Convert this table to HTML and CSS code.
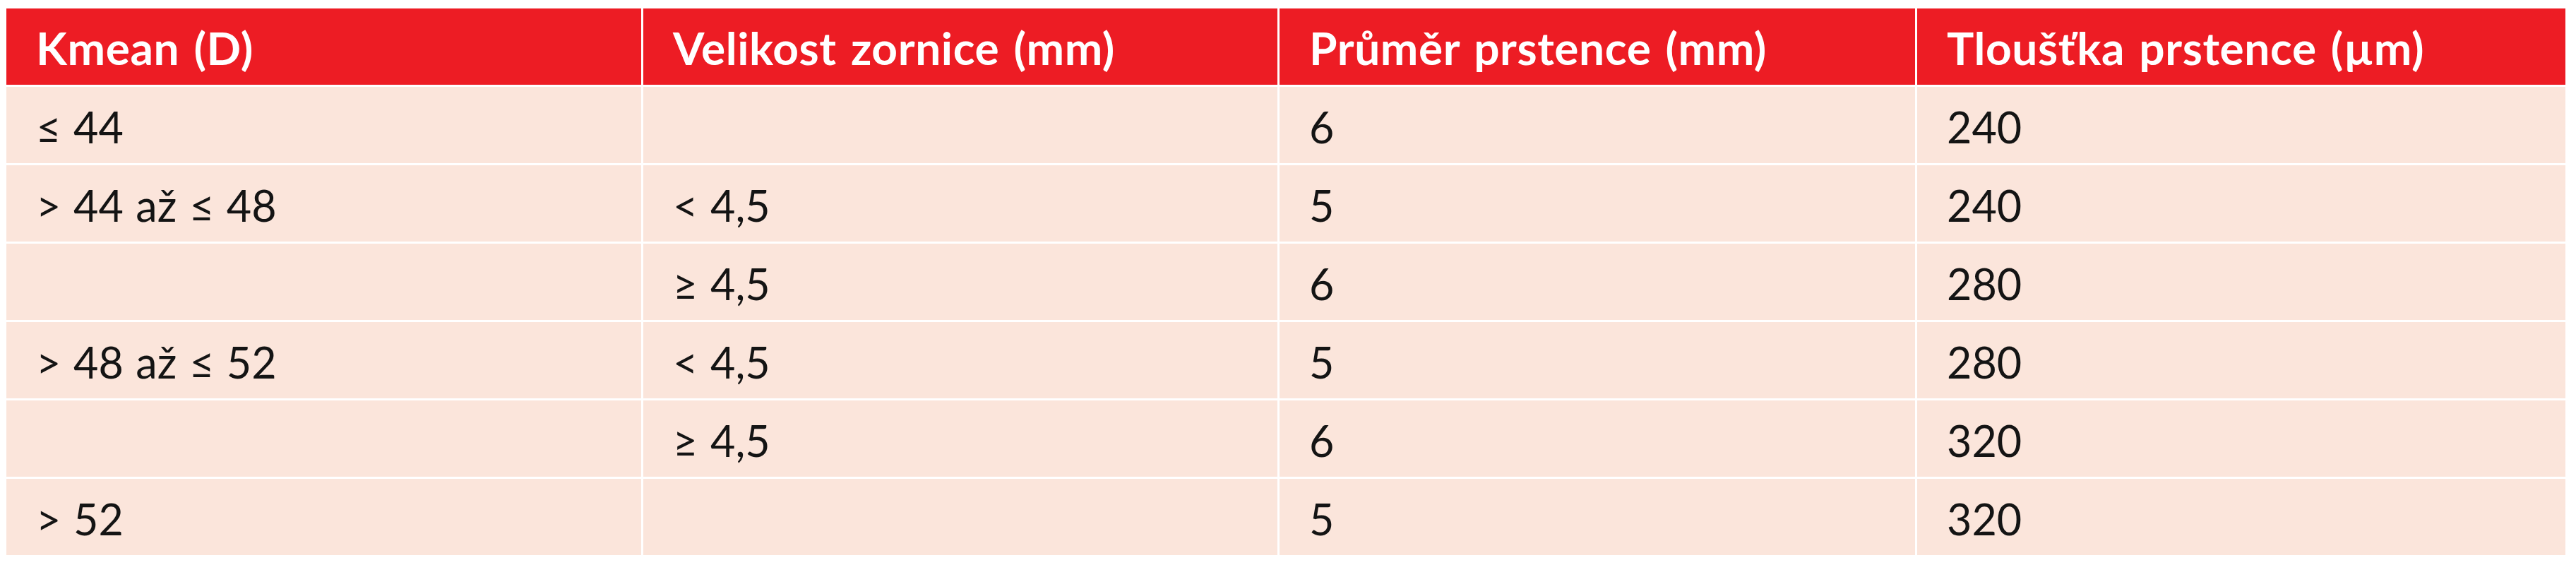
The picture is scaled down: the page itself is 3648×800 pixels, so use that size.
FILE: index.html
```html
<!DOCTYPE html>
<html lang="cs">
<head>
<meta charset="utf-8">
<title>Tabulka prstenců</title>
<link rel="stylesheet" href="styles.css">
</head>
<body>
<div class="table">
  <div class="cell head">Kmean (D)</div>
  <div class="cell head">Velikost zornice (mm)</div>
  <div class="cell head">Průměr prstence (mm)</div>
  <div class="cell head">Tloušťka prstence (µm)</div>

  <div class="cell">≤ 44</div>
  <div class="cell"></div>
  <div class="cell">6</div>
  <div class="cell">240</div>

  <div class="cell">&gt; 44 až ≤ 48</div>
  <div class="cell">&lt; 4,5</div>
  <div class="cell">5</div>
  <div class="cell">240</div>

  <div class="cell"></div>
  <div class="cell">≥ 4,5</div>
  <div class="cell">6</div>
  <div class="cell">280</div>

  <div class="cell">&gt; 48 až ≤ 52</div>
  <div class="cell">&lt; 4,5</div>
  <div class="cell">5</div>
  <div class="cell">280</div>

  <div class="cell"></div>
  <div class="cell">≥ 4,5</div>
  <div class="cell">6</div>
  <div class="cell">320</div>

  <div class="cell">&gt; 52</div>
  <div class="cell"></div>
  <div class="cell">5</div>
  <div class="cell">320</div>
</div>
</body>
</html>
```
FILE: styles.css
```css
html, body {
  margin: 0;
  background: #ffffff;
}
body {
  padding: 12px 0 0 9px;
  font-family: Lato, "Open Sans", "DejaVu Sans", sans-serif;
}
.table {
  display: grid;
  grid-template-columns: 899px 898px 900px 918px;
  grid-auto-rows: 108px;
  column-gap: 3px;
  row-gap: 3px;
  width: 3624px;
}
.cell {
  display: flex;
  align-items: center;
  padding: 5px 0 0 42px;
  box-sizing: border-box;
  background: #fbe5db;
  color: #141414;
  font-size: 61px;
  word-spacing: 2px;
  white-space: nowrap;
}
.head {
  background: #ed1c24;
  color: #ffffff;
  font-weight: 700;
  font-size: 64px;
  letter-spacing: 0.6px;
  word-spacing: 4px;
  padding-top: 3px;
}
```
